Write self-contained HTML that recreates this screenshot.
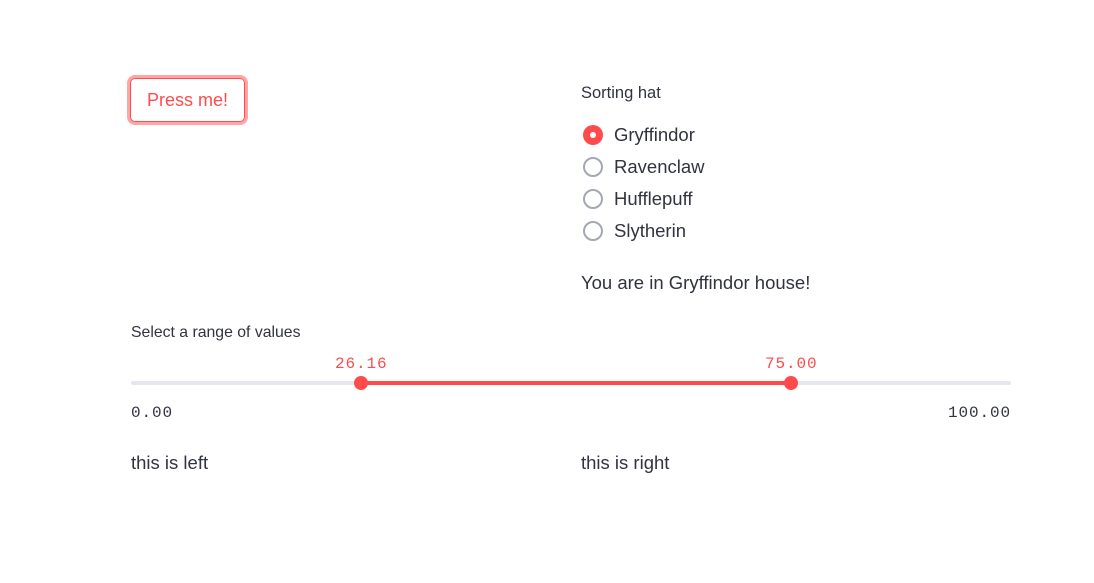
<!DOCTYPE html>
<html><head><style>
body{margin:0;width:1094px;height:583px;background:#fff;font-family:"Liberation Sans",sans-serif;color:#31333f;position:relative;overflow:hidden}
.a{position:absolute;white-space:nowrap}
.btn{left:130px;top:78px;width:115px;height:44px;border:1px solid #ff4b4b;border-radius:5px;box-shadow:0 0 0 3px rgba(255,75,75,.5);color:#ff4b4b;font-size:18px;display:flex;align-items:center;justify-content:center;box-sizing:border-box}
.r{position:absolute;left:583px;width:20px;height:20px;border-radius:50%;box-sizing:border-box;border:2px solid #a3a8b4}
.on{background:#ff4b4b;border:none}
.on::after{content:"";position:absolute;left:7px;top:7px;width:6px;height:6px;background:#fff;border-radius:50%}
.lbl{font-size:18.5px;left:614px}
.mono{font-family:"Liberation Mono",monospace;font-size:16px;letter-spacing:0.9px}
</style></head><body>
<div class="a btn">Press me!</div>
<div class="a" style="left:581px;top:84px;font-size:16.5px">Sorting hat</div>
<div class="r on" style="top:125px"></div><div class="a lbl" style="top:124px">Gryffindor</div>
<div class="r" style="top:157px"></div><div class="a lbl" style="top:156px">Ravenclaw</div>
<div class="r" style="top:189px"></div><div class="a lbl" style="top:188px">Hufflepuff</div>
<div class="r" style="top:221px"></div><div class="a lbl" style="top:220px">Slytherin</div>
<div class="a" style="left:581px;top:272px;font-size:18.5px">You are in Gryffindor house!</div>
<div class="a" style="left:131px;top:324px;font-size:15.8px">Select a range of values</div>
<div class="a mono" style="left:335px;top:355px;color:#ff4b4b">26.16</div>
<div class="a mono" style="left:765px;top:355px;color:#ff4b4b">75.00</div>
<div class="a" style="left:131px;top:381px;width:880px;height:4px;background:#e6e6ee;border-radius:2px"></div>
<div class="a" style="left:361px;top:381px;width:430px;height:4px;background:#ff4b4b"></div>
<div class="a" style="left:354px;top:376px;width:14px;height:14px;border-radius:50%;background:#ff4b4b"></div>
<div class="a" style="left:784px;top:376px;width:14px;height:14px;border-radius:50%;background:#ff4b4b"></div>
<div class="a mono" style="left:131px;top:404px">0.00</div>
<div class="a mono" style="left:948px;top:404px">100.00</div>
<div class="a" style="left:131px;top:452px;font-size:18.5px">this is left</div>
<div class="a" style="left:581px;top:452px;font-size:18.5px">this is right</div>
</body></html>
